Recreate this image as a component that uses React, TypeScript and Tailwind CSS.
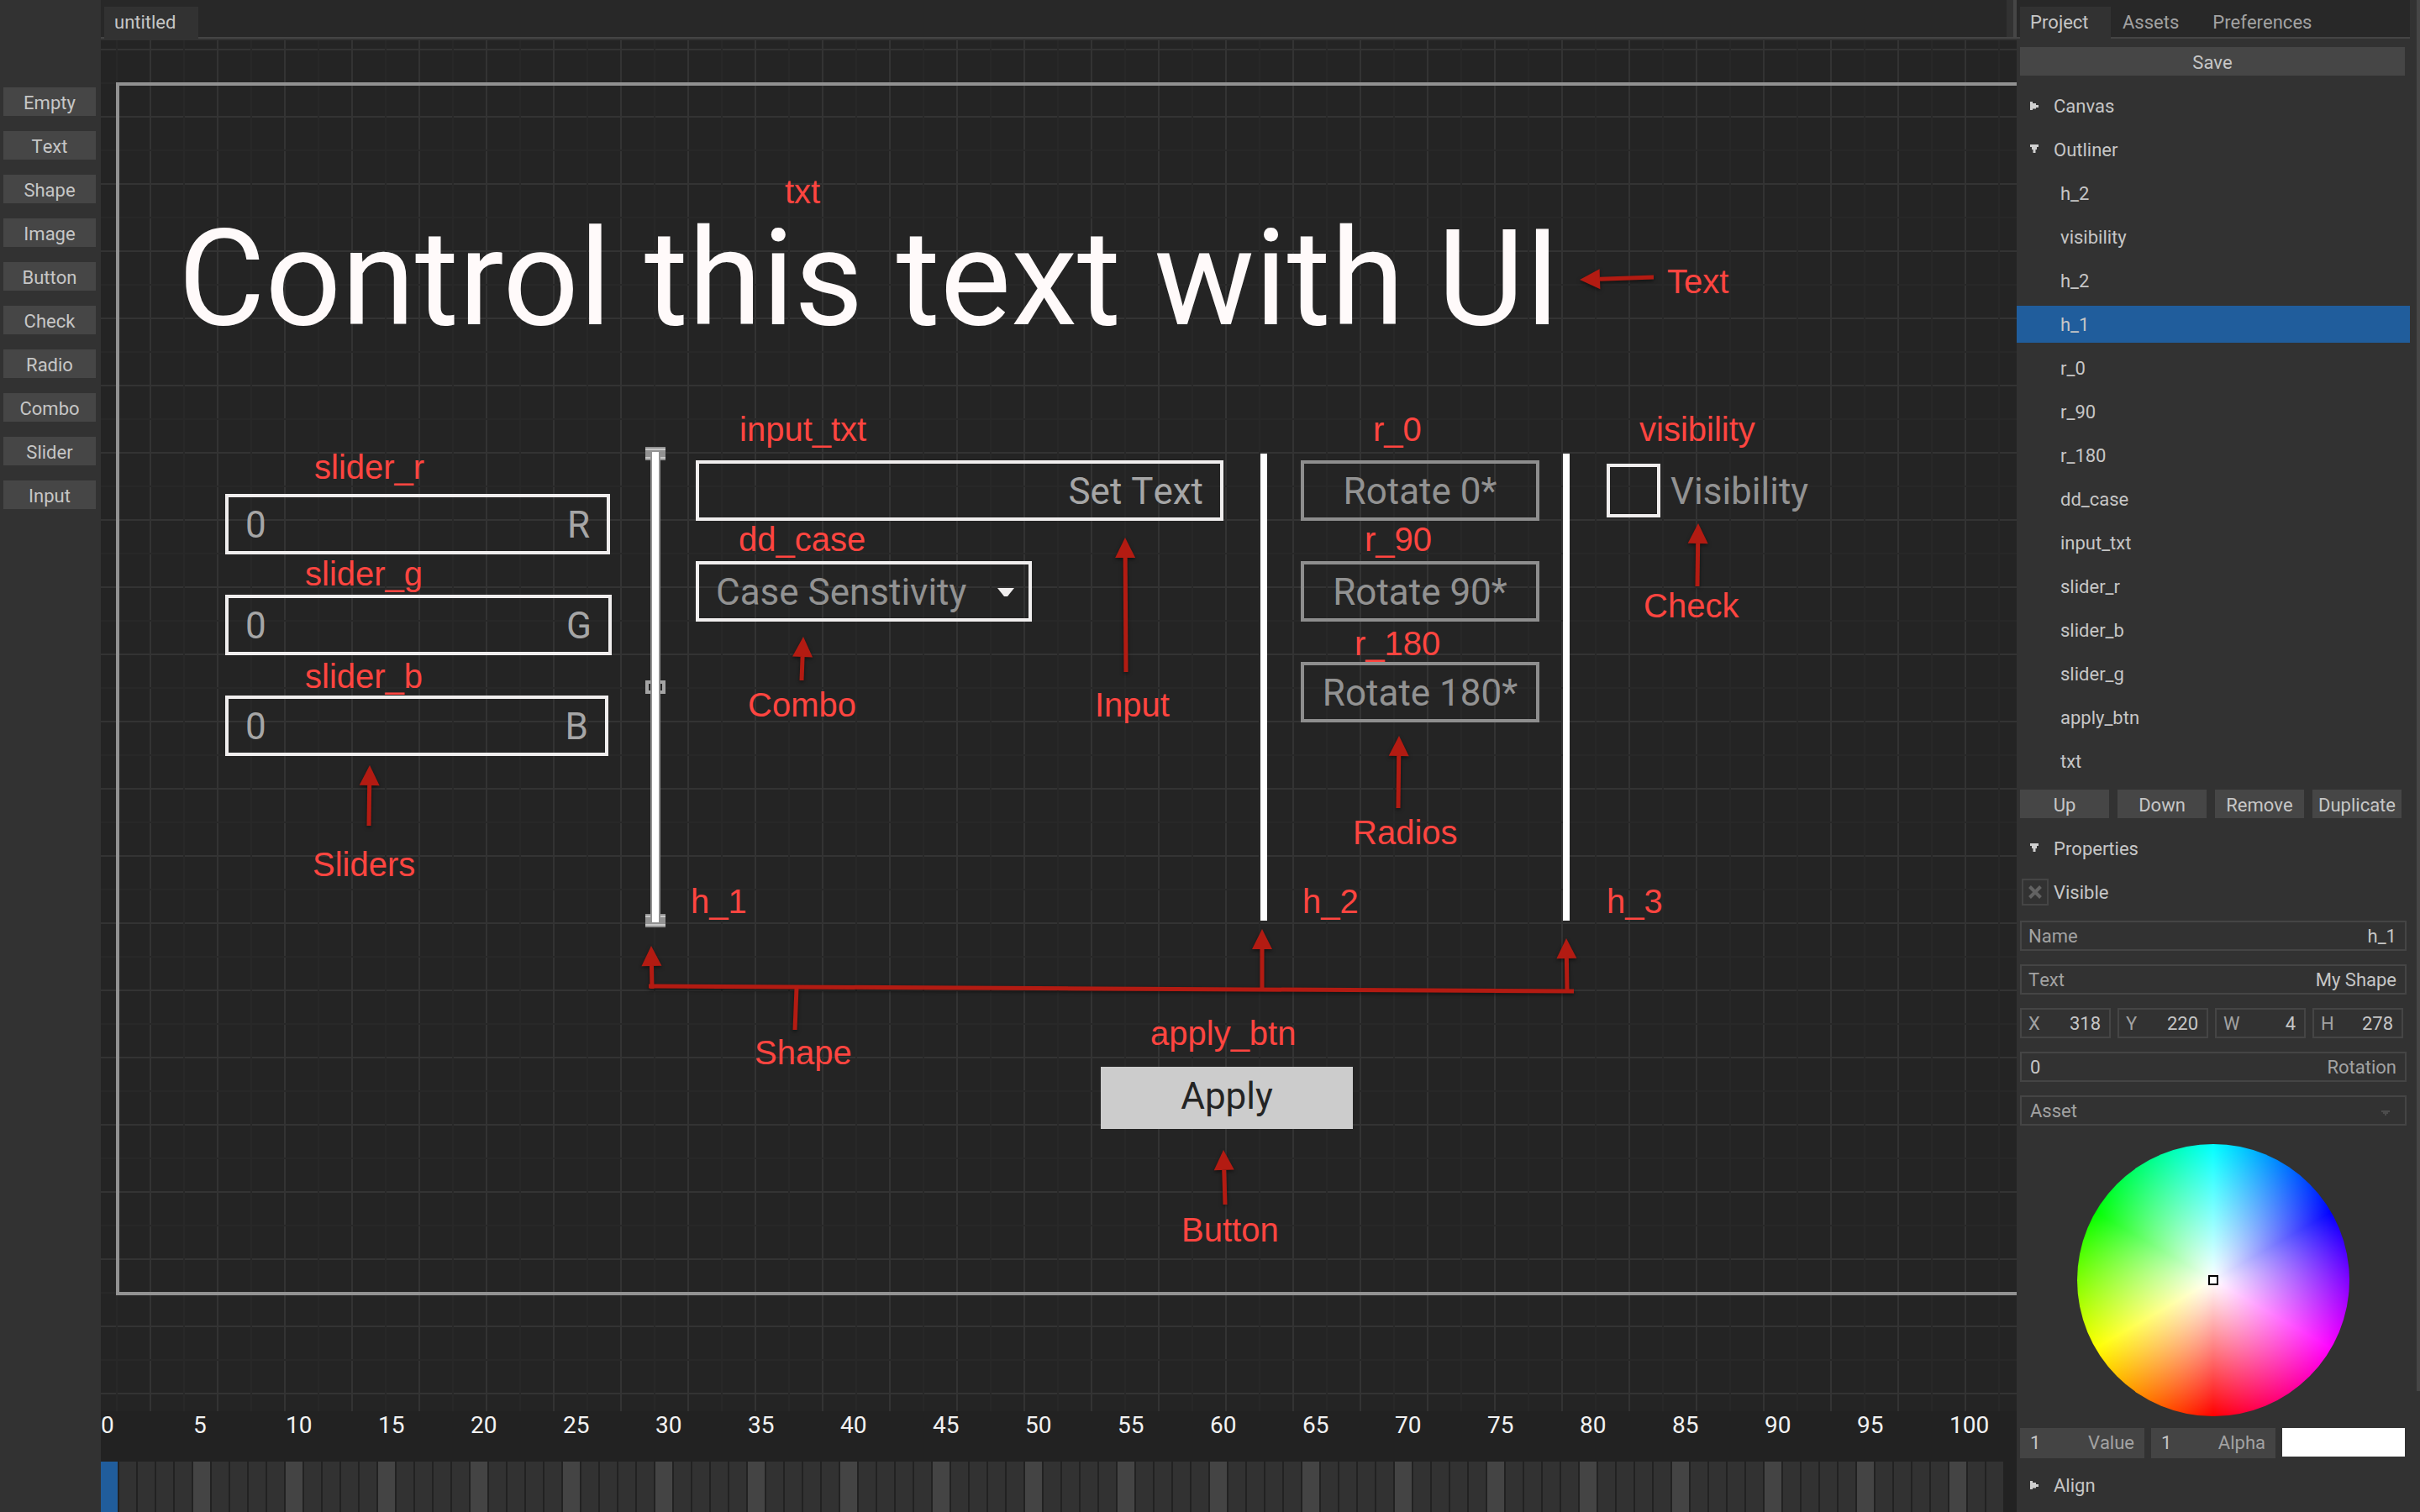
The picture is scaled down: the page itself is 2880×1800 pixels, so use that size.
import React, { useState } from "react";

const TOOLS = ["Empty", "Text", "Shape", "Image", "Button", "Check", "Radio", "Combo", "Slider", "Input"];

const OUTLINE = [
  "h_2", "visibility", "h_2", "h_1", "r_0", "r_90", "r_180",
  "dd_case", "input_txt", "slider_r", "slider_b", "slider_g", "apply_btn", "txt",
];

const NOTES = [
  { text: "txt", at: "left-[794px] top-[107px]" },
  { text: "Text", at: "left-[1844px] top-[214px]" },
  { text: "slider_r", at: "left-[234px] top-[435px]" },
  { text: "slider_g", at: "left-[223px] top-[562px]" },
  { text: "slider_b", at: "left-[223px] top-[684px]" },
  { text: "Sliders", at: "left-[232px] top-[908px]" },
  { text: "input_txt", at: "left-[740px] top-[390px]" },
  { text: "dd_case", at: "left-[739px] top-[521px]" },
  { text: "Combo", at: "left-[750px] top-[718px]" },
  { text: "Input", at: "left-[1163px] top-[718px]" },
  { text: "h_1", at: "left-[682px] top-[952px]" },
  { text: "r_0", at: "left-[1494px] top-[390px]" },
  { text: "r_90", at: "left-[1484px] top-[521px]" },
  { text: "r_180", at: "left-[1472px] top-[645px]" },
  { text: "Radios", at: "left-[1470px] top-[870px]" },
  { text: "h_2", at: "left-[1410px] top-[952px]" },
  { text: "visibility", at: "left-[1811px] top-[390px]" },
  { text: "Check", at: "left-[1816px] top-[600px]" },
  { text: "h_3", at: "left-[1772px] top-[952px]" },
  { text: "Shape", at: "left-[758px] top-[1132px]" },
  { text: "apply_btn", at: "left-[1229px] top-[1109px]" },
  { text: "Button", at: "left-[1266px] top-[1343px]" },
];

type Arrow = { tip: [number, number]; tail: [number, number] };

const ARROWS: Arrow[] = [
  { tip: [1740, 233], tail: [1828, 230] },
  { tip: [300, 811], tail: [299, 883] },
  { tip: [816, 658], tail: [814, 710] },
  { tip: [1199, 540], tail: [1200, 700] },
  { tip: [1525, 776], tail: [1524, 862] },
  { tip: [1881, 523], tail: [1880, 598] },
  { tip: [635, 1026], tail: [636, 1077] },
  { tip: [1362, 1006], tail: [1362, 1077] },
  { tip: [1724, 1017], tail: [1725, 1080] },
  { tip: [1316, 1269], tail: [1318, 1334] },
];

function ArrowMark({ tip, tail }: Arrow) {
  const dx = tail[0] - tip[0];
  const dy = tail[1] - tip[1];
  const len = Math.hypot(dx, dy);
  const ux = dx / len;
  const uy = dy / len;
  const bx = tip[0] + ux * 24;
  const by = tip[1] + uy * 24;
  return (
    <>
      <line x1={bx} y1={by} x2={tail[0]} y2={tail[1]} stroke="#b31b12" strokeWidth="5" />
      <polygon
        points={`${tip[0]},${tip[1]} ${bx - uy * 12},${by + ux * 12} ${bx + uy * 12},${by - ux * 12}`}
        fill="#b31b12"
      />
    </>
  );
}

function Caret({ open }: { open?: boolean }) {
  return open ? (
    <svg viewBox="0 0 10 10" className="mr-[18px] mb-1 size-[10px] fill-[#d0d0d0]">
      <path d="M0 0h10v3H8v3H6.500v4h-3V6H2V3H0z" />
    </svg>
  ) : (
    <svg viewBox="0 0 10 10" className="mr-[18px] mb-[2px] size-[10px] fill-[#d0d0d0]">
      <path d="M0 0h3v2h4v2h3v3H7v1.500H3V10H0z" />
    </svg>
  );
}

function SectionHead({ title, open }: { title: string; open?: boolean }) {
  return (
    <button type="button" aria-expanded={!!open} className="flex h-[52px] w-full items-center pt-[2px] pl-4 text-left">
      <Caret open={open} />
      {title}
    </button>
  );
}

function CanvasSlider({ name, label, className }: { name: string; label: string; className: string }) {
  return (
    <label className={`absolute flex h-[72px] items-center border-4 border-[#f0eeee] px-5 pt-[2px] text-[#a6a6a6] ${className}`}>
      <input name={name} defaultValue="0" inputMode="numeric" className="w-0 min-w-0 flex-1 bg-transparent outline-none" />
      <span>{label}</span>
    </label>
  );
}

function CanvasRadio({ label, className }: { label: string; className: string }) {
  return (
    <label className={`absolute left-[1408px] flex h-[72px] w-[284px] items-center justify-center border-4 border-[#8e8e8e] pt-[2px] text-[#929292] ${className}`}>
      <input type="radio" name="rotate" className="absolute size-0 appearance-none" />
      {label}
    </label>
  );
}

function Field({ label, value, trailingLabel }: { label: string; value: string; trailingLabel?: boolean }) {
  return (
    <label className="flex h-9 min-w-0 items-center border-2 border-[#454545] px-[10px] pt-[2px] text-[#a2a2a2]">
      {!trailingLabel && <span className="-ml-[2px]">{label}</span>}
      <input
        defaultValue={value}
        className={
          trailingLabel
            ? "w-0 min-w-0 flex-1 bg-transparent text-[#c6c6c6] outline-none"
            : "w-0 min-w-0 flex-1 bg-transparent text-right text-[#c6c6c6] outline-none"
        }
      />
      {trailingLabel && <span>{label}</span>}
    </label>
  );
}

function ToolRail() {
  return (
    <nav aria-label="Elements" className="flex w-[120px] shrink-0 flex-col gap-[18px] bg-[#323232] py-[104px] pr-[6px] pl-1">
      {TOOLS.map((tool) => (
        <button key={tool} type="button" className="h-[34px] w-full bg-[#464646] pt-1">
          {tool}
        </button>
      ))}
    </nav>
  );
}

function Stage() {
  return (
    <div className="relative min-h-0 flex-1 overflow-hidden bg-[#242424] bg-[repeating-linear-gradient(to_bottom,transparent_0_50px,#282828_50px_52px,transparent_52px_80px),repeating-linear-gradient(to_right,transparent_0_18px,#282828_18px_20px,transparent_20px_80px),repeating-linear-gradient(to_right,transparent_0_58px,#333333_58px_60px,transparent_60px_80px),repeating-linear-gradient(to_bottom,transparent_0_10px,#333333_10px_12px,transparent_12px_80px)]">
      <div className="absolute top-[52px] left-5 text-[44px] leading-[52px]">
        <div className="absolute -top-[2px] -left-[2px] h-[1444px] w-[2564px] border-4 border-[#929292]" />

        <h1 className="absolute top-[152px] left-[72px] text-[159px] leading-[160px] whitespace-nowrap text-[#fffafa] [font-kerning:normal]">
          Control this text with UI
        </h1>

        <CanvasSlider name="slider_r" label="R" className="top-[488px] left-[128px] w-[458px]" />
        <CanvasSlider name="slider_g" label="G" className="top-[608px] left-[128px] w-[460px]" />
        <CanvasSlider name="slider_b" label="B" className="top-[728px] left-[128px] w-[456px]" />

        <div className="absolute top-[432px] left-[628px] h-4 w-6 bg-[#929292] py-[2px]">
          <div className="h-3 border-y-2 border-[#c8c8c8]" />
        </div>
        <div className="absolute top-[710px] left-[628px] h-4 w-6 border-4 border-[#a4a4a4]" />
        <div className="absolute top-[988px] left-[628px] h-4 w-6 bg-[#929292] py-[2px]">
          <div className="h-3 border-y-2 border-[#c8c8c8]" />
        </div>
        <div className="absolute top-[438px] left-[634px] h-[560px] w-3 border-x-2 border-[#929292] bg-white" />
        <div className="absolute top-[440px] left-[1360px] h-[556px] w-2 bg-white" />
        <div className="absolute top-[440px] left-[1720px] h-[556px] w-2 bg-white" />

        <label className="absolute top-[448px] left-[688px] flex h-[72px] w-[628px] items-center border-4 border-[#f0eeee] px-5 pt-[2px] text-[#a6a6a6]">
          <input name="input_txt" className="w-0 min-w-0 flex-1 bg-transparent outline-none" />
          <span>Set Text</span>
        </label>

        <div className="absolute top-[568px] left-[688px] h-[72px] w-[400px]">
          <select aria-label="Case Senstivity" className="h-full w-full appearance-none border-4 border-[#f0eeee] bg-transparent px-5 pt-[2px] text-[#929292]">
            <option>Case Senstivity</option>
          </select>
          <svg viewBox="0 0 20 10" className="pointer-events-none absolute top-8 right-[21px] h-[10px] w-5 fill-[#f0eeee]">
            <path d="M0 0h20L12 10H8z" />
          </svg>
        </div>

        <CanvasRadio label="Rotate 0*" className="top-[448px]" />
        <CanvasRadio label="Rotate 90*" className="top-[568px]" />
        <CanvasRadio label="Rotate 180*" className="top-[688px]" />

        <label className="absolute top-[452px] left-[1772px] flex h-16 items-center gap-3 text-[#929292]">
          <input type="checkbox" name="visibility" className="size-16 appearance-none border-4 border-[#f0eeee]" />
          <span className="pt-[2px]">Visibility</span>
        </label>

        <button type="button" className="absolute top-[1170px] left-[1170px] h-[74px] w-[300px] bg-[#cccccc] pb-1 text-[#242424]">
          Apply
        </button>

        <svg
          viewBox="0 0 2300 1440"
          className="pointer-events-none absolute top-0 left-0 h-[1440px] w-[2300px] max-w-none drop-shadow-[0_2px_2px_rgba(0,0,0,0.5)]"
        >
          <line x1="632" y1="1074" x2="1733" y2="1080" stroke="#b31b12" strokeWidth="5" />
          <line x1="808" y1="1076" x2="806" y2="1126" stroke="#b31b12" strokeWidth="5" />
          {ARROWS.map((a) => (
            <ArrowMark key={a.tip.join()} {...a} />
          ))}
        </svg>

        {NOTES.map((note) => (
          <span
            key={note.at}
            className={`absolute font-['Liberation_Sans',Arial,sans-serif] text-[40px] leading-[42px] whitespace-nowrap text-[#ff4540] [font-kerning:normal] ${note.at}`}
          >
            {note.text}
          </span>
        ))}
      </div>
    </div>
  );
}

function Timeline() {
  const marks = Array.from({ length: 21 }, (_, i) => i * 5);
  const frames = Array.from({ length: 103 }, (_, i) => i);
  return (
    <div className="h-[120px] shrink-0 overflow-hidden bg-[#222222]">
      <div className="flex h-[60px] text-[28px] leading-[34px] text-[#f2f2f2]">
        {marks.map((m) => (
          <span key={m} className="w-[110px] shrink-0">
            {m}
          </span>
        ))}
      </div>
      <div className="flex h-[60px] gap-[2px]">
        {frames.map((f) => (
          <div
            key={f}
            className={
              f === 0 ? "w-5 shrink-0 bg-[#205d9c]" : f % 5 === 0 ? "w-5 shrink-0 bg-[#444444]" : "w-5 shrink-0 bg-[#323232]"
            }
          />
        ))}
      </div>
    </div>
  );
}

function ColorWheel() {
  return (
    <div
      role="img"
      aria-label="Color wheel"
      className="mx-auto mt-[22px] flex size-[324px] items-center justify-center rounded-full bg-[radial-gradient(circle_closest-side,#ffffff,rgba(255,255,255,0)),conic-gradient(#00ffff,#0000ff_60deg,#ff00ff_120deg,#ff0000_180deg,#ffff00_240deg,#00ff00_300deg,#00ffff)]"
    >
      <div className="size-3 border-2 border-black bg-white" />
    </div>
  );
}

function SidePanel() {
  const [selected, setSelected] = useState(3);
  return (
    <aside className="flex w-[480px] shrink-0 bg-[#323232]">
      <div className="min-w-0 flex-1">
        <div role="tablist" className="flex h-[46px] items-stretch border-b-2 border-[#444444] bg-[#282828] pt-2 pl-1">
          <button role="tab" type="button" aria-selected="true" className="-mb-[2px] w-[108px] bg-[#323232] pl-3 text-left">
            Project
          </button>
          <button role="tab" type="button" aria-selected="false" className="pt-[2px] pr-5 pl-[14px] text-[#a2a2a2]">
            Assets
          </button>
          <button role="tab" type="button" aria-selected="false" className="px-5 pt-[2px] text-[#a2a2a2]">
            Preferences
          </button>
        </div>

        <div className="mt-[10px] mb-[10px] flex pr-[6px] pl-1">
          <button type="button" className="h-[34px] flex-1 bg-[#464646] pt-1">
            Save
          </button>
        </div>

        <SectionHead title="Canvas" />
        <SectionHead title="Outliner" open />
        <ul>
          {OUTLINE.map((name, i) => (
            <li key={i} className="py-1">
              <button
                type="button"
                onClick={() => setSelected(i)}
                className={i === selected ? "block h-11 w-full bg-[#205d9c] pt-[2px] pl-[52px] text-left" : "block h-11 w-full pt-[2px] pl-[52px] text-left"}
              >
                {name}
              </button>
            </li>
          ))}
        </ul>

        <div className="mt-2 mb-[10px] grid grid-cols-4 gap-[10px] pr-[10px] pl-1">
          {["Up", "Down", "Remove", "Duplicate"].map((action) => (
            <button key={action} type="button" className="h-[34px] bg-[#464646] pt-1 whitespace-nowrap">
              {action}
            </button>
          ))}
        </div>

        <SectionHead title="Properties" open />
        <label className="flex h-[52px] items-center pl-[6px]">
          <span className="relative mr-[6px] size-8">
            <input type="checkbox" defaultChecked className="block size-8 appearance-none border-2 border-[#454545]" />
            <svg viewBox="0 0 16 16" className="pointer-events-none absolute top-2 left-2 size-4 stroke-[#626262]" strokeWidth="4">
              <path d="M1.500 1.500l13 13M14.500 1.500l-13 13" />
            </svg>
          </span>
          <span className="pt-[2px]">Visible</span>
        </label>

        <div className="mt-2 flex flex-col gap-4 pr-1 pl-1">
          <Field label="Name" value="h_1" />
          <Field label="Text" value="My Shape" />
          <div className="mr-1 grid grid-cols-4 gap-2">
            <Field label="X" value="318" />
            <Field label="Y" value="220" />
            <Field label="W" value="4" />
            <Field label="H" value="278" />
          </div>
          <Field label="Rotation" value="0" trailingLabel />
          <div className="relative">
            <select aria-label="Asset" className="block h-9 w-full appearance-none border-2 border-[#454545] bg-transparent px-[10px] pt-[2px] text-[#a2a2a2]">
              <option>Asset</option>
            </select>
            <svg viewBox="0 0 10 6" className="pointer-events-none absolute top-[18px] right-5 h-[6px] w-[10px] fill-[#4c4c4c]">
              <path d="M0 0h10v2H8v2H6v2H4V4H2V2H0z" />
            </svg>
          </div>
        </div>

        <ColorWheel />

        <div className="mt-[14px] mb-[6px] flex items-start gap-2 pr-[6px] pl-1 text-[#a2a2a2]">
          {["Value", "Alpha"].map((channel) => (
            <label key={channel} className="flex h-9 w-[148px] items-center bg-[#444444] px-3">
              <input defaultValue="1" inputMode="decimal" className="w-0 min-w-0 flex-1 bg-transparent text-[#c6c6c6] outline-none" />
              <span>{channel}</span>
            </label>
          ))}
          <button type="button" aria-label="Current color" className="h-[34px] flex-1 bg-white" />
        </div>

        <SectionHead title="Align" />
      </div>
      <div className="flex w-3 shrink-0 justify-end">
        <div className="h-[92%] w-1 bg-[#464646]" />
      </div>
    </aside>
  );
}

export default function App() {
  return (
    <div className="flex h-screen overflow-hidden bg-[#323232] font-[Roboto,'Liberation_Sans',sans-serif] text-[22px] leading-[26px] text-[#c6c6c6] [font-kerning:none]">
      <ToolRail />
      <main className="flex min-w-0 flex-1 flex-col">
        <div className="flex h-12 shrink-0 justify-between border-b-2 border-[#323232] bg-[#282828]">
          <div role="tablist" className="flex flex-1 items-stretch border-b-2 border-[#444444] pt-2 pl-1">
            <button role="tab" type="button" aria-selected="true" className="-mb-[2px] w-28 bg-[#323232] pl-3 text-left">
              untitled
            </button>
          </div>
          <div className="w-2 border-b-2 border-[#444444] bg-[#323232]" />
          <div className="w-1 bg-[#464646]" />
        </div>
        <Stage />
        <Timeline />
      </main>
      <SidePanel />
    </div>
  );
}
